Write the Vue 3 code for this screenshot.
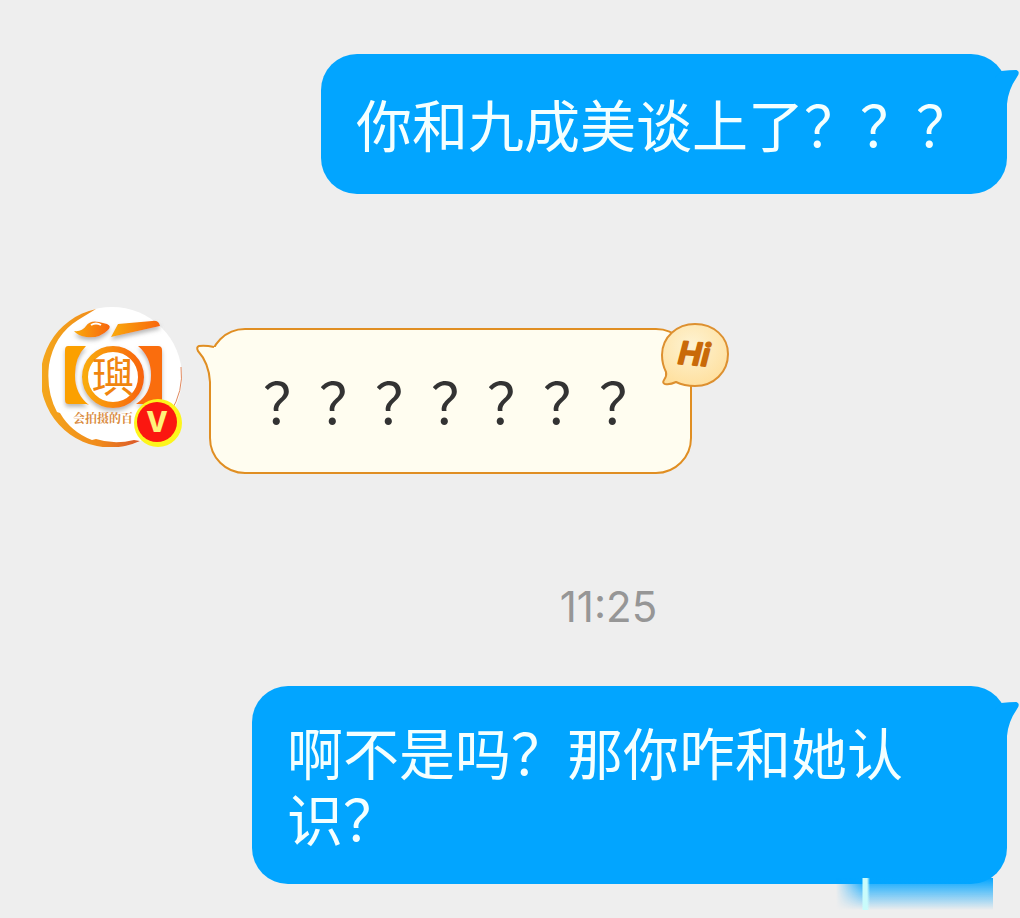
<script setup>
import { ref } from 'vue';

const messages = ref([
    { id: 1, type: 'sent', text: '你和九成美谈上了？？？' },
    { id: 2, type: 'received', text: '？？？？？？？' },
    { id: 3, type: 'time', text: '11:25' },
    { id: 4, type: 'sent', text: '啊不是吗？那你咋和她认识？' }
])
</script>

<template>
    <main class="chat" lang="zh-CN">
        <template v-for="message in messages" :key="message.id">
            <time v-if="message.type === 'time'" class="time">{{ message.text }}</time>

            <div v-else-if="message.type === 'sent'" class="row sent-row">
                <div class="bubble sent">
                    <p>{{ message.text }}</p>
                    <svg class="sent-tail" viewBox="0 0 30 50" aria-hidden="true">
                        <path d="M4 14 L10 7 Q19 6 25 6 Q30 7 26 13 Q17 26 16 40 L4 40 Z" fill="#02a5ff" />
                    </svg>
                </div>
            </div>

            <div v-else class="row received-row">
                <svg class="avatar" viewBox="0 0 140 140" role="img" aria-label="头像">
                    <defs>
                        <linearGradient id="orange" x1="0" x2="1" y1="0" y2="0">
                            <stop offset="0" stop-color="#f9ab0c" />
                            <stop offset="1" stop-color="#f8650b" />
                        </linearGradient>
                        <linearGradient id="ring" x1="0" x2="1" y1="0" y2="0">
                            <stop offset="0" stop-color="#f4a71c" />
                            <stop offset="0.6" stop-color="#f08a1c" />
                            <stop offset="1" stop-color="#d9562a" />
                        </linearGradient>
                        <filter id="shade" x="-20%" y="-20%" width="140%" height="150%">
                            <feDropShadow dx="0" dy="3" stdDeviation="2" flood-color="#888" flood-opacity="0.6" />
                        </filter>
                    </defs>
                    <circle cx="70" cy="70" r="70" fill="#fff" />
                    <path d="M54 2 A70 70 0 1 0 98 134 L92 133 Q72 138 54 132 L50 133 Q29 125 18 106 L15 105 Q4 84 7 58 Q12 28 36 13 Z" fill="url(#ring)" />
                    <path d="M139 60 Q142 84 128 106" fill="none" stroke="#e0895f" stroke-width="1" />
                    <g filter="url(#shade)">
                        <path d="M32 24 Q40 25 44 19 Q48 13 57 15 L65 17 Q70 19 66 23 Q57 32 44 30 Q36 29 32 24 Z" fill="url(#orange)" />
                        <path d="M76 17 L110 14 Q117 13 118 19 L69 30 Z" fill="url(#orange)" />
                        <path d="M26 39 H44 Q33 50 33 68 Q33 87 47 98 L44 97 H26 Q23 97 23 93 V43 Q23 39 26 39 Z" fill="#fba006" />
                        <path d="M96 39 H116 Q120 39 120 43 V97 H94 Q109 87 109 68 Q109 50 96 39 Z" fill="#fa6d08" />
                        <circle cx="71" cy="70" r="28" fill="#fff" stroke="url(#orange)" stroke-width="6" />
                    </g>
                    <path d="M49 18 q5 -3 10 0" fill="none" stroke="#fff" stroke-width="2" />
                    <text x="71" y="85" class="seal" text-anchor="middle">璵</text>
                    <text x="31" y="116" class="caption">会拍摄的百</text>
                    <circle cx="116" cy="116" r="24" fill="#fdf51c" />
                    <circle cx="115" cy="115" r="20" fill="#fb1710" />
                    <text x="115" y="125" class="verified" text-anchor="middle">V</text>
                </svg>
                <div class="bubble received">
                    <p>{{ message.text }}</p>
                    <svg class="received-tail" viewBox="0 0 30 50" aria-hidden="true">
                        <path d="M18 7 Q10 6 4 6 Q1 7 3 11 Q14 23 15 42 L20 42 L24 7 Z" fill="#fffdf0" />
                        <path d="M19 7 Q10 5 4 6 Q1 7 3 11 Q14 23 15 42" fill="none" stroke="#e08e22" stroke-width="2" stroke-linejoin="round" />
                    </svg>
                    <svg class="hi" viewBox="0 0 70 66" aria-hidden="true">
                        <defs>
                            <radialGradient id="glow" cx="0.45" cy="0.35" r="0.7">
                                <stop offset="0" stop-color="#fdf3d3" />
                                <stop offset="1" stop-color="#ffdf9c" />
                            </radialGradient>
                        </defs>
                        <path d="M6 50 Q2 42 2 33 C2 15 17 2 35 2 C54 2 68 15 68 32 C68 50 54 64 35 64 Q24 64 16 60 Q10 63 5 62 Q2 61 4 58 Q7 54 6 50 Z" fill="url(#glow)" stroke="#dd9030" stroke-width="2" />
                        <text x="34" y="43" class="hi-text" text-anchor="middle" transform="rotate(5 35 33)">Hi</text>
                    </svg>
                </div>
            </div>
        </template>
        <div class="smudge"></div>
    </main>
</template>

<style>
body {
  background-color: #eeeeee;
}
</style>

<style scoped>
.chat {
  position: relative;
  display: flex;
  flex-direction: column;
  padding: 54px 13px 35px 42px;
  overflow: hidden;
  background-color: #eeeeee;
  font-family: 'Noto Sans CJK SC', sans-serif;
}

p {
  margin: 0;
}

.row {
  display: flex;
}

.sent-row {
  justify-content: flex-end;
  padding-left: 210px;
}

.bubble {
  position: relative;
  display: flex;
  align-items: center;
  box-sizing: border-box;
  border-radius: 36px;
  font-size: 56px;
  line-height: 66px;
}

.sent {
  min-height: 140px;
  padding: 32px 35px 34px;
  background-color: #02a5ff;
  color: #f4ffff;
}

.sent-tail {
  position: absolute;
  top: 10px;
  right: -14px;
  width: 30px;
  height: 50px;
}

.received-row {
  align-items: flex-start;
  gap: 27px;
  margin-top: 113px;
}

.avatar {
  flex: none;
  width: 140px;
  height: 140px;
}

.seal {
  fill: #f0850f;
  font-family: 'Noto Sans CJK SC', sans-serif;
  font-size: 42px;
}

.caption {
  fill: #d98a3c;
  font-family: 'Noto Serif CJK SC', 'Noto Sans CJK SC', serif;
  font-size: 12px;
  font-weight: bold;
}

.verified {
  fill: #fff27a;
  font-family: Inter, sans-serif;
  font-size: 28px;
  font-weight: 800;
}

.received {
  min-height: 146px;
  margin-top: 21px;
  padding: 32px 35px 34px 52px;
  border: 2px solid #e08e22;
  background-color: #fffdf0;
  color: #333333;
}

.received-tail {
  position: absolute;
  top: 10px;
  left: -16px;
  width: 30px;
  height: 50px;
}

.hi {
  position: absolute;
  top: -8px;
  right: -40px;
  width: 70px;
  height: 66px;
}

.hi-text {
  fill: #c96a09;
  stroke: #c96a09;
  stroke-width: 2px;
  stroke-linejoin: round;
  font-family: Inter, sans-serif;
  font-size: 31px;
  font-style: italic;
  font-weight: 600;
}

.time {
  margin: 109px 0 55px;
  padding-left: 168px;
  color: #969696;
  font-family: Inter, sans-serif;
  font-size: 42px;
  line-height: 48px;
  text-align: center;
}

/* leftover blur strip under the last bubble */
.smudge {
  position: absolute;
  right: 27px;
  bottom: 9px;
  width: 157px;
  height: 32px;
  background:
    linear-gradient(to right, transparent 26px, #c9fbfb 27px, #c9fbfb 31px, transparent 34px),
    linear-gradient(to bottom, #02a5ff, #02a5ff00);
  mask-image: linear-gradient(to right, transparent, #000 26px);
}
</style>
